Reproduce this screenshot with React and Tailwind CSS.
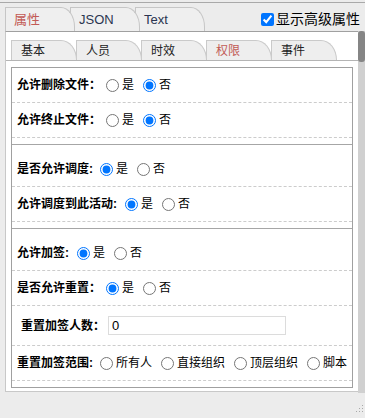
import React from "react";

function TopTab({ label, active, z }) {
  return (
    <div
      className={`relative w-[70px] h-[24px] pl-[8px] flex items-center border-t border-l border-r border-[#c6c6c6] bg-[#efefef] rounded-tr-[14px_20px] text-[13px] ${z} ${active ? "text-[#c25a55]" : "text-[#2b3550]"}`}
    >
      {label}
    </div>
  );
}

function InnerTab({ label, active, z }) {
  return (
    <div
      className={`relative w-[66px] h-[20px] pl-[9px] flex items-center border-t border-l border-r border-[#cacaca] bg-[#eeeeee] rounded-tr-[16px_20px] text-[12px] ${z} ${active ? "text-[#c25a55]" : "text-[#222]"}`}
    >
      {label}
    </div>
  );
}

function Radio({ name, label, checked }) {
  return (
    <label className="flex items-center mr-[4px] font-normal">
      <input
        type="radio"
        name={name}
        defaultChecked={checked}
        className="ml-[5px] mr-[3px] w-[13px] h-[13px]"
      />
      {label}
    </label>
  );
}

function Row({ label, name, options, checked, pad = "", tall = false, children }) {
  return (
    <div
      className={`flex items-center pl-[5px] border-b border-dashed border-[#cccccc] ${tall ? "h-[40px]" : "h-[35px]"}`}
    >
      <span className={`font-bold ${pad}`}>{label}</span>
      {options &&
        options.map((o, i) => (
          <Radio key={o} name={name} label={o} checked={checked === i} />
        ))}
      {children}
    </div>
  );
}

export default function App() {
  return (
    <div className="w-[365px] h-[418px] bg-[#ececec] overflow-hidden pt-[2px] font-['Liberation_Sans','Noto_Sans_CJK_SC',sans-serif] text-[12px] leading-[16px] text-black">
      {/* top header with tabs */}
      <div className="border-t border-[#a9a9a9] h-[29px] flex items-end pl-[5px] pr-[5px]">
        <TopTab label="属性" active z="z-30" />
        <div className="-ml-[5px]">
          <TopTab label="JSON" z="z-20" />
        </div>
        <div className="-ml-[5px]">
          <TopTab label="Text" z="z-10" />
        </div>
        <label className="ml-auto self-start mt-[7px] flex items-center text-[14px] leading-[18px]">
          <input type="checkbox" defaultChecked className="w-[13px] h-[13px] mr-[2px]" />
          显示高级属性
        </label>
      </div>

      {/* panel */}
      <div className="flex">
        <div className="ml-[5px] w-[353px] h-[361px] bg-white border-l border-t border-b border-l-[#c8c8c8] border-t-[#a0a0a0] border-b-[#c8c8c8]">
          <div className="pt-[8px] pl-[5px] flex border-b border-[#b4b4b4]">
            <InnerTab label="基本" z="z-50" />
            <div className="-ml-[1px]">
              <InnerTab label="人员" z="z-40" />
            </div>
            <div className="-ml-[1px]">
              <InnerTab label="时效" z="z-30" />
            </div>
            <div className="-ml-[1px]">
              <InnerTab label="权限" active z="z-20" />
            </div>
            <div className="-ml-[1px]">
              <InnerTab label="事件" z="z-10" />
            </div>
          </div>

          <div className="ml-[5px] mt-[6px] w-[342px] border border-[#a0a0a0]">
            <div className="pb-[6px]">
              <Row label="允许删除文件：" name="del" options={["是", "否"]} checked={1} />
              <Row label="允许终止文件：" name="stop" options={["是", "否"]} checked={1} />
            </div>
            <div className="border-t border-[#a6a6a6] pt-[7px] pb-[6px]">
              <Row label="是否允许调度:" name="dd" options={["是", "否"]} checked={0} pad="pr-[2px]" />
              <Row label="允许调度到此活动:" name="ddh" options={["是", "否"]} checked={0} pad="pr-[3px]" />
            </div>
            <div className="border-t border-[#a6a6a6] pt-[7px] pb-[6px]">
              <Row label="允许加签:" name="jq" options={["是", "否"]} checked={0} pad="pr-[3px]" />
              <Row label="是否允许重置：" name="cz" options={["是", "否"]} checked={0} />
              <Row label="重置加签人数：" pad="pl-[4px]" tall>
                <input
                  type="text"
                  defaultValue="0"
                  className="ml-[3px] w-[178px] h-[19px] border border-[#dcdcdc] pl-[3px] text-[13px] font-['Liberation_Sans',sans-serif] outline-none"
                />
              </Row>
              <Row
                label="重置加签范围:"
                name="fw"
                options={["所有人", "直接组织", "顶层组织", "脚本"]}
                checked={-1}
                pad="pr-[2px]"
              />
            </div>
          </div>
        </div>

        {/* scrollbar */}
        <div className="w-[7px] h-[362px] bg-[#d0d0d0] flex flex-col">
          <div className="h-[31px] bg-[#858585] rounded-[3px]" />
        </div>
      </div>

      {/* resize grip */}
      <div className="flex justify-end pr-[1px] pt-[12px]">
        <svg width="8" height="8" viewBox="0 0 8 8">
          <rect x="6" y="0" width="1" height="1" fill="#a8a8a8" />
          <rect x="3" y="3" width="1" height="1" fill="#a8a8a8" />
          <rect x="6" y="3" width="1" height="1" fill="#a8a8a8" />
          <rect x="0" y="6" width="1" height="1" fill="#a8a8a8" />
          <rect x="3" y="6" width="1" height="1" fill="#a8a8a8" />
          <rect x="6" y="6" width="1" height="1" fill="#a8a8a8" />
        </svg>
      </div>
    </div>
  );
}
